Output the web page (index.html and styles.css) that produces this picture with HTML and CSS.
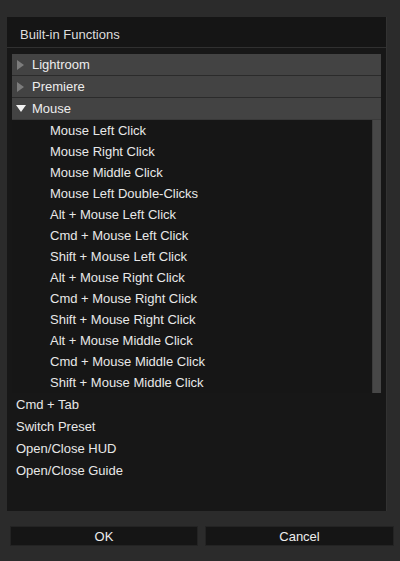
FILE: index.html
```html
<!DOCTYPE html>
<html>
<head>
<meta charset="utf-8">
<link rel="stylesheet" href="styles.css">
</head>
<body>
<div class="dialog">
  <div class="panel">
    <div class="panel-title">Built-in Functions</div>
    <div class="tree">
      <div class="group-row"><span class="tri tri-right"></span><span class="label">Lightroom</span></div>
      <div class="group-row"><span class="tri tri-right"></span><span class="label">Premiere</span></div>
      <div class="group-row open"><span class="tri tri-down"></span><span class="label">Mouse</span></div>
      <div class="children">
        <div class="child-list">
          <div class="child">Mouse Left Click</div>
          <div class="child">Mouse Right Click</div>
          <div class="child">Mouse Middle Click</div>
          <div class="child">Mouse Left Double-Clicks</div>
          <div class="child">Alt + Mouse Left Click</div>
          <div class="child">Cmd + Mouse Left Click</div>
          <div class="child">Shift + Mouse Left Click</div>
          <div class="child">Alt + Mouse Right Click</div>
          <div class="child">Cmd + Mouse Right Click</div>
          <div class="child">Shift + Mouse Right Click</div>
          <div class="child">Alt + Mouse Middle Click</div>
          <div class="child">Cmd + Mouse Middle Click</div>
          <div class="child">Shift + Mouse Middle Click</div>
        </div>
        <div class="scrollbar"><div class="thumb"></div></div>
      </div>
      <div class="item">Cmd + Tab</div>
      <div class="item">Switch Preset</div>
      <div class="item">Open/Close HUD</div>
      <div class="item">Open/Close Guide</div>
    </div>
  </div>
  <div class="buttons">
    <div class="btn">OK</div>
    <div class="btn">Cancel</div>
  </div>
</div>
</body>
</html>
```

FILE: styles.css
```css
html, body {
  margin: 0;
  padding: 0;
  background: #2b2b2b;
  font-family: "Liberation Sans", Arial, sans-serif;
  font-size: 13px;
  color: #e4e4e4;
}
.dialog {
  width: 400px;
  height: 561px;
  padding: 17px 0 0 7px;
  box-sizing: border-box;
}
.panel {
  width: 380px;
  height: 494px;
  background: #171717;
  border-right: 1px solid #323232;
  box-sizing: border-box;
  display: flex;
  flex-direction: column;
}
.panel-title {
  height: 31px;
  box-sizing: border-box;
  padding: 7px 0 0 13px;
  line-height: 21px;
  color: #dedede;
  background: #151515;
  border-bottom: 1px solid #303030;
}
.tree {
  padding: 6px 5px 0 5px;
  display: flex;
  flex-direction: column;
}
.group-row {
  height: 22px;
  box-sizing: border-box;
  background: #434343;
  border-bottom: 1px solid #2b2b2b;
  display: flex;
  align-items: center;
  line-height: 22px;
}
.group-row.open {
  border-bottom: 1px solid #3a3a3a;
}
.tri {
  width: 20px;
  display: flex;
  justify-content: center;
  align-items: center;
  height: 21px;
  flex-shrink: 0;
}
.tri-right::before {
  content: "";
  display: block;
  margin-left: -4px;
  border-top: 5px solid transparent;
  border-bottom: 5px solid transparent;
  border-left: 7px solid #7c7c7c;
}
.tri-down::before {
  content: "";
  display: block;
  margin-left: -3px;
  border-left: 5px solid transparent;
  border-right: 5px solid transparent;
  border-top: 7px solid #f2f2f2;
}
.label {
  color: #ededed;
  padding-top: 1px;
}
.children {
  display: flex;
}
.child-list {
  flex: 1;
  background: #161616;
}
.child {
  height: 21px;
  line-height: 22px;
  padding-left: 38px;
  color: #e8e8e8;
}
.scrollbar {
  width: 9px;
  background: #1c1c1c;
}
.thumb {
  height: 100%;
  background: #474747;
  border-left: 1px solid #3c3c3c;
  box-sizing: border-box;
}
.item {
  height: 22px;
  line-height: 24px;
  padding-left: 4px;
  color: #e8e8e8;
}
.buttons {
  display: flex;
  gap: 7px;
  margin: 15px 0 0 3px;
}
.btn {
  width: 188px;
  height: 20px;
  box-sizing: border-box;
  background: #151515;
  border: 1px solid #232323;
  text-align: center;
  line-height: 19px;
  color: #ededed;
}
.btn + .btn {
  width: 189px;
}
```
